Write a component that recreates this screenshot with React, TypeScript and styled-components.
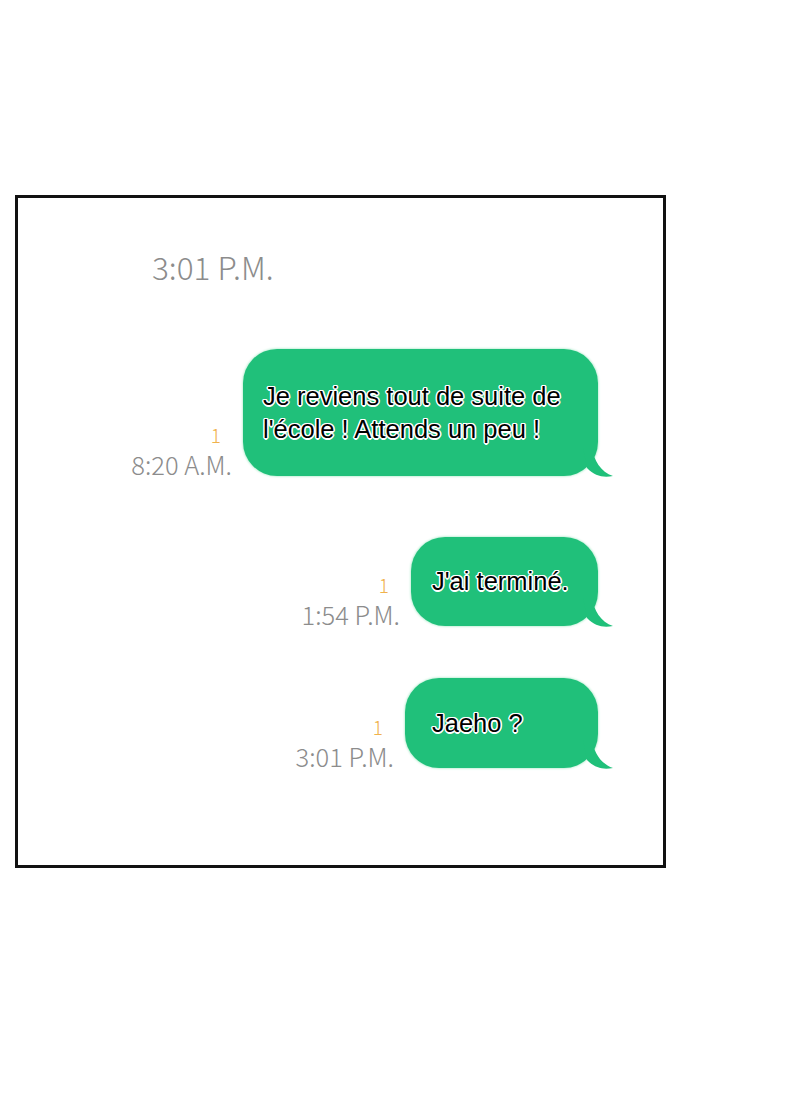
import styled, { createGlobalStyle } from 'styled-components';

const GlobalStyle = createGlobalStyle`
  html, body {
    margin: 0;
    padding: 0;
    background: #ffffff;
  }
`;

type Message = {
  text: string[];
  time: string;
  width: number;
  height: number;
  padLeft: number;
  gapAfter: number;
};

const messages: Message[] = [
  {
    text: ['Je reviens tout de suite de', "l'école ! Attends un peu !"],
    time: '8:20 A.M.',
    width: 355,
    height: 127,
    padLeft: 20,
    gapAfter: 61,
  },
  { text: ["J'ai terminé."], time: '1:54 P.M.', width: 187, height: 89, padLeft: 21, gapAfter: 52 },
  { text: ['Jaeho ?'], time: '3:01 P.M.', width: 193, height: 90, padLeft: 27, gapAfter: 0 },
];

const Tail = () => (
  <TailSvg width="30" height="30" viewBox="0 0 30 30">
    <path d="M0 0 L10 0 C10 12 18 24 30 28 C20 30 12 28 4 20 Z" fill="#20c07a" />
  </TailSvg>
);

const App = () => {
  return (
    <>
      <GlobalStyle />
      <Page>
        <Panel>
          <HeaderTime>3:01 P.M.</HeaderTime>
          <Thread>
            {messages.map((m, i) => (
              <Row key={i} $gap={m.gapAfter}>
                <Meta>
                  <Unread>1</Unread>
                  <Time>{m.time}</Time>
                </Meta>
                <Bubble $w={m.width} $h={m.height} $pl={m.padLeft}>
                  <BubbleText>
                    {m.text.map((line, j) => (
                      <div key={j}>{line}</div>
                    ))}
                  </BubbleText>
                  <Tail />
                </Bubble>
              </Row>
            ))}
          </Thread>
        </Panel>
      </Page>
    </>
  );
};

export default App;

const Page = styled.div`
  width: 800px;
  height: 1112px;
  padding: 195px 0 0 15px;
  box-sizing: border-box;
`;

const Panel = styled.div`
  width: 651px;
  height: 673px;
  box-sizing: border-box;
  border: 3px solid #111;
  background: #fff;
  padding: 46px 65px 0 0;
  display: flex;
  flex-direction: column;
`;

const HeaderTime = styled.div`
  margin-left: 134px;
  font-family: 'Noto Sans CJK KR', 'Noto Sans', sans-serif;
  font-weight: 300;
  font-size: 31.5px;
  line-height: 44px;
  color: #8c8c8c;
`;

const Thread = styled.div`
  margin-top: 61px;
  display: flex;
  flex-direction: column;
`;

const Row = styled.div<{ $gap: number }>`
  display: flex;
  justify-content: flex-end;
  align-items: flex-end;
  gap: 11px;
  margin-bottom: ${(p) => p.$gap}px;
`;

const Meta = styled.div`
  display: flex;
  flex-direction: column;
  align-items: flex-end;
  font-family: 'Noto Sans CJK KR', 'Noto Sans', sans-serif;
  font-weight: 300;
  margin-bottom: -2px;
`;

const Unread = styled.span`
  font-size: 19px;
  line-height: 22px;
  color: #f0b24c;
  margin-right: 11px;
  margin-bottom: 4px;
`;

const Time = styled.span`
  font-size: 25.5px;
  line-height: 28px;
  color: #8c8c8c;
  white-space: nowrap;
`;

const Bubble = styled.div<{ $w: number; $h: number; $pl: number }>`
  position: relative;
  width: ${(p) => p.$w}px;
  height: ${(p) => p.$h}px;
  box-sizing: border-box;
  padding-left: ${(p) => p.$pl}px;
  background: #20c07a;
  border-radius: 34px;
  box-shadow: 0 0 2px 1px #c8f2dc;
  display: flex;
  align-items: center;
`;

const BubbleText = styled.div`
  font-family: 'Liberation Sans', Arial, sans-serif;
  font-size: 25.5px;
  line-height: 33px;
  color: #000;
  white-space: nowrap;
  text-shadow:
    -1.5px 0 0 #fff,
    1.5px 0 0 #fff,
    0 -1.5px 0 #fff,
    0 1.5px 0 #fff,
    -1px -1px 0 #fff,
    1px -1px 0 #fff,
    -1px 1px 0 #fff,
    1px 1px 0 #fff;
`;

const TailSvg = styled.svg`
  position: absolute;
  right: -15px;
  bottom: -2px;
`;
